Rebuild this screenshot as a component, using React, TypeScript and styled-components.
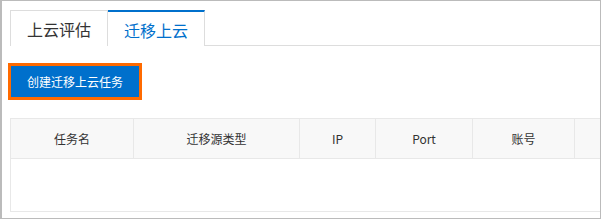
import React from "react";
import styled, { createGlobalStyle } from "styled-components";

const Global = createGlobalStyle`
  html, body { margin: 0; padding: 0; background: #fff; }
  body { font-family: "Noto Sans CJK SC", "Noto Sans", sans-serif; }
  * { box-sizing: border-box; }
`;

const Frame = styled.div`
  width: 601px;
  height: 219px;
  border: 1px solid #bbbbbb;
  border-left-width: 2px;
  padding: 9px 0 0 8px;
  overflow: hidden;
  display: flex;
  flex-direction: column;
  align-items: flex-start;
  background: #fff;
`;

const TabBar = styled.div`
  display: flex;
  align-self: stretch;
  height: 36px;
  border-bottom: 1px solid #dddddd;
`;

const Tab = styled.div<{ $active?: boolean }>`
  height: 36px;
  width: ${(p) => (p.$active ? "97px" : "98px")};
  display: flex;
  align-items: center;
  justify-content: center;
  font-size: 16px;
  line-height: 1;
  background: #fff;
  color: ${(p) => (p.$active ? "#0070cc" : "#333333")};
  border: 1px solid #dddddd;
  border-left: ${(p) => (p.$active ? "none" : "1px solid #dddddd")};
  border-bottom: none;
  border-top: ${(p) => (p.$active ? "2px solid #0070cc" : "1px solid #dddddd")};
  padding-top: ${(p) => (p.$active ? "1px" : "0")};
  position: relative;
  z-index: 1;
`;

const CreateButton = styled.button`
  margin: 20px 0 0 1px;
  width: 128px;
  height: 31px;
  border: none;
  background: #0070cc;
  color: #fff;
  font-family: "Noto Sans CJK SC", "Noto Sans", sans-serif;
  font-size: 12px;
  line-height: 1;
  padding: 0;
  outline: 3px solid #ff6a00;
  cursor: pointer;
`;

const Table = styled.div`
  margin-top: 21px;
  width: 700px;
  border-top: 1px solid #e8e8e8;
  border-left: 1px solid #e8e8e8;
`;

const HeaderRow = styled.div`
  display: grid;
  grid-template-columns: 123px 166px 76px 97px 102px 136px;
  background: #f8f8f8;
`;

const HeadCell = styled.div`
  height: 40px;
  display: flex;
  align-items: center;
  justify-content: center;
  font-size: 12px;
  color: #333333;
  border-right: 1px solid #e8e8e8;
  border-bottom: 1px solid #e8e8e8;
`;

const EmptyBody = styled.div`
  height: 53px;
  border-bottom: 1px solid #e8e8e8;
`;

const columns = ["任务名", "迁移源类型", "IP", "Port", "账号", ""];

export default function App() {
  return (
    <>
      <Global />
      <Frame>
        <TabBar>
          <Tab>上云评估</Tab>
          <Tab $active>迁移上云</Tab>
        </TabBar>
        <CreateButton>创建迁移上云任务</CreateButton>
        <Table>
          <HeaderRow>
            {columns.map((c, i) => (
              <HeadCell key={i}>{c}</HeadCell>
            ))}
          </HeaderRow>
          <EmptyBody />
        </Table>
      </Frame>
    </>
  );
}
